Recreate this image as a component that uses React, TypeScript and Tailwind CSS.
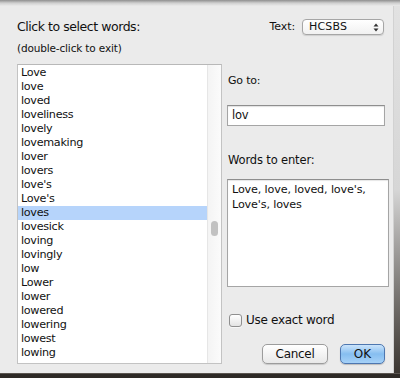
import React from "react";

const words = [
  "Love",
  "love",
  "loved",
  "loveliness",
  "lovely",
  "lovemaking",
  "lover",
  "lovers",
  "love's",
  "Love's",
  "loves",
  "lovesick",
  "loving",
  "lovingly",
  "low",
  "Lower",
  "lower",
  "lowered",
  "lowering",
  "lowest",
  "lowing",
];

export default function App() {
  return (
    <div className="w-[400px] h-[378px] flex flex-col bg-[#ebebeb] overflow-hidden text-[#111] font-['DejaVu_Sans',sans-serif]">
      <div className="h-[6px] shrink-0 bg-gradient-to-b from-[#8f8f8f] via-[#cfcfcf] to-[#ebebeb]" />
      <div className="flex flex-1 min-h-0">
        <div className="w-[393px] flex flex-col pt-[13px]">
          {/* header */}
          <div className="flex items-start h-[16px]">
            <div className="pl-[17px] text-[12.5px] leading-[16px] tracking-[-0.45px]">
              Click to select words:
            </div>
            <div className="ml-auto mr-[9px] flex items-center">
              <span className="text-[11px] leading-[16px] tracking-[-0.1px] mr-[7px]">Text:</span>
              <div className="w-[82px] h-[16px] rounded-[4px] border border-[#a6a6a6] bg-gradient-to-b from-white to-[#f1f1f1] shadow-[0_1px_1px_rgba(0,0,0,0.12)] flex items-center pl-[6px] pr-[4px]">
                <span className="text-[11px] leading-[14px] tracking-[0.2px]">HCSBS</span>
                <svg className="ml-auto" width="6" height="9" viewBox="0 0 6 9">
                  <path d="M3 0.5 L5.5 3.5 L0.5 3.5 Z" fill="#333" />
                  <path d="M3 8.5 L5.5 5.5 L0.5 5.5 Z" fill="#333" />
                </svg>
              </div>
            </div>
          </div>
          <div className="pl-[17px] mt-[6px] text-[10.5px] leading-[14px] tracking-[-0.15px]">
            (double-click to exit)
          </div>
          {/* body */}
          <div className="flex mt-[9px]">
            <div className="ml-[17px] w-[205px] h-[300px] border border-[#c3c3c3] border-t-[#b8b8b8] bg-white flex">
              <div className="w-[189px] pt-[1px] overflow-hidden">
                {words.map((w) => (
                  <div
                    key={w}
                    className={
                      "h-[14px] leading-[14px] pl-[3px] text-[11.2px] tracking-[-0.3px] " +
                      (w === "loves" ? "bg-[#b6d4fb]" : "")
                    }
                  >
                    {w}
                  </div>
                ))}
              </div>
              <div className="w-[14px] border-l border-[#e6e6e6] bg-gradient-to-r from-[#f4f4f4] to-[#fbfbfb] pt-[156px] pl-[3px]">
                <div className="w-[7px] h-[15px] rounded-full bg-[#c2c2c2]" />
              </div>
            </div>
            <div className="ml-[5px] w-[162px] flex flex-col">
              <div className="mt-[9px] pl-[1px] text-[11px] leading-[15px] tracking-[-0.2px]">Go to:</div>
              <div className="mt-[17px] w-[158px] h-[21px] bg-white border border-[#a5a5a5] border-t-[#8e8e8e] shadow-[inset_0_1px_1px_rgba(0,0,0,0.12)] pl-[4px] text-[11.5px] leading-[19px] tracking-[-0.2px]">
                lov
              </div>
              <div className="mt-[27px] pl-[1px] text-[11.5px] leading-[15px] tracking-[-0.15px]">Words to enter:</div>
              <div className="mt-[11px] w-[162px] h-[108px] bg-white border border-[#a5a5a5] border-t-[#8e8e8e] shadow-[inset_0_1px_1px_rgba(0,0,0,0.1)] px-[4px] pt-[2px] text-[11.2px] leading-[15px] tracking-[-0.15px]">
                Love, love, loved, love's,
                <br />
                Love's, loves
              </div>
              <div className="mt-[25px] h-[16px] flex items-center pl-[2px]">
                <div className="w-[13px] h-[13px] rounded-[3px] border border-[#8f8f8f] bg-gradient-to-b from-white to-[#e4e4e4] shadow-[0_1px_0_rgba(255,255,255,0.6)]" />
                <span className="ml-[4px] text-[12px] leading-[16px] tracking-[-0.3px]">Use exact word</span>
              </div>
              <div className="mt-[16px] flex justify-end pr-[4px] gap-[12px]">
                <div className="w-[66px] h-[20px] rounded-[5px] border border-[#9c9c9c] bg-gradient-to-b from-white to-[#e8e8e8] shadow-[0_1px_1px_rgba(0,0,0,0.15)] flex items-center justify-center text-[12px] leading-[18px] tracking-[-0.3px]">
                  Cancel
                </div>
                <div className="w-[45px] h-[20px] rounded-[5px] border border-[#4e77b0] bg-gradient-to-b from-[#cbe4fb] via-[#86bef0] to-[#a6d1f7] shadow-[0_1px_1px_rgba(0,0,0,0.2)] flex items-center justify-center text-[12px] leading-[18px]">
                  OK
                </div>
              </div>
            </div>
          </div>
        </div>
        <div className="w-[7px] flex">
          <div className="w-[1px] bg-[#d2d2d2]" />
          <div className="flex-1 bg-gradient-to-b from-[#e2e2e2] via-[#d6d6d6] to-[#3b3631]" />
        </div>
      </div>
      <div className="h-[5px] shrink-0 bg-[#2e2a26] border-t border-[#5a5550]" />
    </div>
  );
}
